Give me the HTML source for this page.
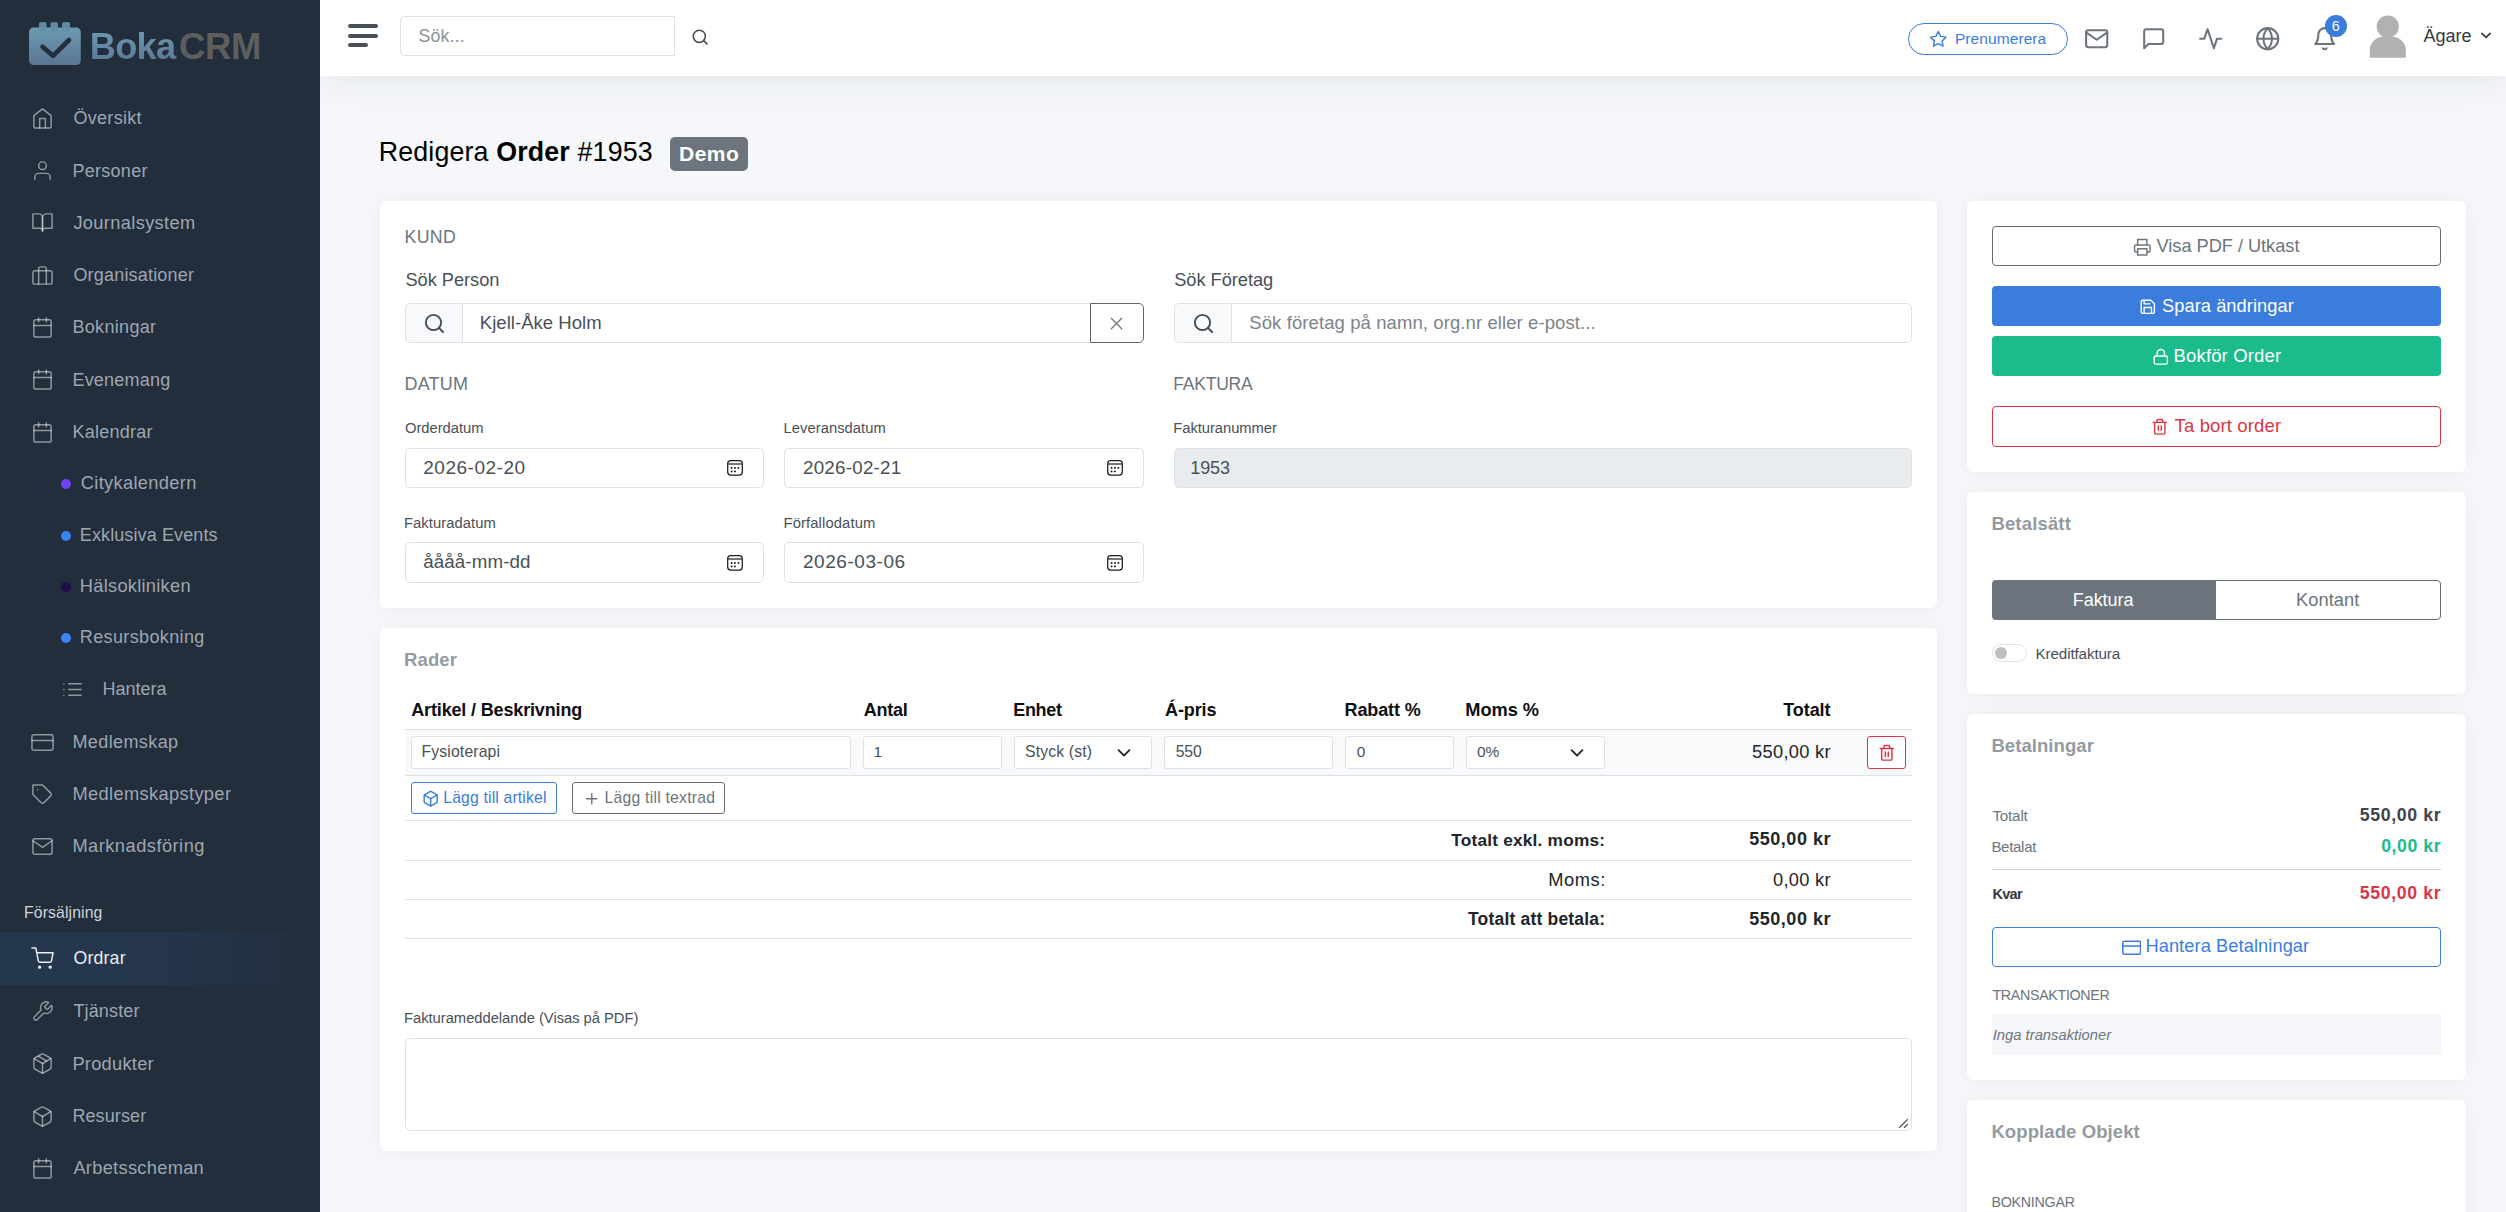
<!DOCTYPE html>
<html lang="sv"><head><meta charset="utf-8"><title>Redigera Order #1953</title><style>
*{box-sizing:border-box;margin:0;padding:0}
html,body{width:2506px;height:1212px;overflow:hidden}
body{background:#f5f7fb;font-family:"Liberation Sans",sans-serif;position:relative}
body>div,body>svg,body>span{position:absolute}
.t{white-space:pre;line-height:1;display:block}
b{font-weight:700}
</style></head><body>
<div style="left:320.00px;top:0.00px;width:2186.00px;height:75.80px;background:#fff;box-shadow:0 0 42px 0 rgba(33,37,41,.1);"></div>
<div style="left:347.90px;top:23.90px;width:30.00px;height:4.00px;background:#495057;border-radius:2px;"></div>
<div style="left:347.90px;top:34.20px;width:30.00px;height:4.00px;background:#495057;border-radius:2px;"></div>
<div style="left:347.90px;top:43.00px;width:20.00px;height:4.00px;background:#495057;border-radius:2px;"></div>
<div style="left:400.00px;top:16.00px;width:275.00px;height:40.00px;background:#fff;border:1px solid #dee2e6;border-radius:5px 0 0 5px;"></div>
<span class="t" style="left:418.40px;top:28.00px;font-size:17.75px;color:#8a9299;letter-spacing:0.168px;">Sök...</span>
<svg style="left:691.20px;top:27.90px;" width="18.20" height="18.20" viewBox="0 0 24 24" fill="none" stroke="#495057" stroke-width="2.1" stroke-linecap="round" stroke-linejoin="round"><circle cx="11" cy="11" r="8"/><line x1="21" y1="21" x2="16.65" y2="16.65"/></svg>
<div style="left:1908.00px;top:23.00px;width:160.00px;height:32.00px;border:1px solid #3b7ddd;border-radius:16px;background:#fff;"></div>
<svg style="left:1928.65px;top:30.15px;" width="18.50" height="18.50" viewBox="0 0 24 24" fill="none" stroke="#3b7ddd" stroke-width="1.9" stroke-linecap="round" stroke-linejoin="round"><polygon points="12 2 15.09 8.26 22 9.27 17 14.14 18.18 21.02 12 17.77 5.82 21.02 7 14.14 2 9.27 8.91 8.26 12 2"/></svg>
<span class="t" style="left:1954.90px;top:31.00px;font-size:15.50px;color:#3b7ddd;letter-spacing:0.085px;">Prenumerera</span>
<svg style="left:2083.80px;top:25.70px;" width="25.40" height="25.40" viewBox="0 0 24 24" fill="none" stroke="#6c757d" stroke-width="1.95" stroke-linecap="round" stroke-linejoin="round"><path d="M4 4h16c1.1 0 2 .9 2 2v12c0 1.1-.9 2-2 2H4c-1.1 0-2-.9-2-2V6c0-1.1.9-2 2-2z"/><polyline points="22,6 12,13 2,6"/></svg>
<svg style="left:2140.70px;top:25.90px;" width="25.40" height="25.40" viewBox="0 0 24 24" fill="none" stroke="#6c757d" stroke-width="1.95" stroke-linecap="round" stroke-linejoin="round"><path d="M21 15a2 2 0 0 1-2 2H7l-4 4V5a2 2 0 0 1 2-2h14a2 2 0 0 1 2 2z"/></svg>
<svg style="left:2197.80px;top:25.80px;" width="25.40" height="25.40" viewBox="0 0 24 24" fill="none" stroke="#6c757d" stroke-width="1.95" stroke-linecap="round" stroke-linejoin="round"><polyline points="22 12 18 12 15 21 9 3 6 12 2 12"/></svg>
<svg style="left:2254.90px;top:25.70px;" width="25.40" height="25.40" viewBox="0 0 24 24" fill="none" stroke="#6c757d" stroke-width="1.95" stroke-linecap="round" stroke-linejoin="round"><circle cx="12" cy="12" r="10"/><line x1="2" y1="12" x2="22" y2="12"/><path d="M12 2a15.3 15.3 0 0 1 4 10 15.3 15.3 0 0 1-4 10 15.3 15.3 0 0 1-4-10 15.3 15.3 0 0 1 4-10z"/></svg>
<svg style="left:2311.80px;top:25.70px;" width="25.40" height="25.40" viewBox="0 0 24 24" fill="none" stroke="#6c757d" stroke-width="1.95" stroke-linecap="round" stroke-linejoin="round"><path d="M18 8A6 6 0 0 0 6 8c0 7-3 9-3 9h18s-3-2-3-9"/><path d="M13.73 21a2 2 0 0 1-3.46 0"/></svg>
<div style="left:2324.80px;top:14.70px;width:22.20px;height:22.20px;background:#3b7ddd;border-radius:50%;"></div>
<span class="t" style="left:2331.70px;top:19.00px;font-size:14.20px;color:#fff;">6</span>
<svg style="left:2366px;top:12px" width="44" height="48" viewBox="2366 12 44 48"><circle cx="2387.8" cy="26.6" r="11.1" fill="#b1b1b1"/><path d="M2369.8 57.8 v-7.5 a13.5 13.5 0 0 1 13.5 -13.5 h9 a13.5 13.5 0 0 1 13.5 13.5 v7.5 z" fill="#b1b1b1"/></svg>
<span class="t" style="left:2423.40px;top:27.00px;font-size:18.00px;color:#343a40;letter-spacing:-0.009px;">Ägare</span>
<svg style="left:2479.5px;top:31px" width="12" height="9" viewBox="0 0 12 9" fill="none" stroke="#343a40" stroke-width="1.7" stroke-linecap="round" stroke-linejoin="round"><polyline points="1.8,2.3 6,6.4 10.2,2.3"/></svg>
<span class="t" style="left:378.75px;top:139.00px;font-size:26.75px;color:#000;letter-spacing:0.168px;">Redigera <b>Order</b> #1953</span>
<div style="left:670.00px;top:137.00px;width:78.00px;height:34.00px;background:#6c757d;border-radius:5px;"></div>
<span class="t" style="left:679.00px;top:143.00px;font-size:21.00px;color:#fff;font-weight:700;letter-spacing:0.489px;">Demo</span>
<div style="left:380.00px;top:201.00px;width:1557.00px;height:407.00px;background:#fff;border-radius:6px;box-shadow:0 0 18px 0 rgba(33,37,41,.05);"></div>
<span class="t" style="left:404.50px;top:229.00px;font-size:17.75px;color:#6c757d;letter-spacing:0.341px;">KUND</span>
<span class="t" style="left:405.50px;top:271.00px;font-size:18.25px;color:#495057;letter-spacing:-0.049px;">Sök Person</span>
<span class="t" style="left:1174.25px;top:271.00px;font-size:18.25px;color:#495057;letter-spacing:-0.052px;">Sök Företag</span>
<div style="left:462.00px;top:303.00px;width:629.00px;height:40.00px;background:#fff;border:1px solid #dee2e6;border-radius:0;"></div>
<div style="left:405.00px;top:303.00px;width:58.00px;height:40.00px;background:#f8f9fa;border:1px solid #dee2e6;border-radius:5px 0 0 5px;"></div>
<div style="left:1090.00px;top:303.00px;width:54.00px;height:40.00px;background:#fff;border:1px solid #5f6871;border-radius:0 5px 5px 0;"></div>
<svg style="left:422.85px;top:311.65px;" width="22.90" height="22.90" viewBox="0 0 24 24" fill="none" stroke="#454c54" stroke-width="2.0" stroke-linecap="round" stroke-linejoin="round"><circle cx="11" cy="11" r="8"/><line x1="21" y1="21" x2="16.65" y2="16.65"/></svg>
<span class="t" style="left:479.75px;top:314.00px;font-size:18.50px;color:#495057;letter-spacing:0.046px;">Kjell-Åke Holm</span>
<svg style="left:1106.25px;top:313.00px;" width="21.00" height="21.00" viewBox="0 0 24 24" fill="none" stroke="#6c757d" stroke-width="1.5" stroke-linecap="round" stroke-linejoin="round"><line x1="18" y1="6" x2="6" y2="18"/><line x1="6" y1="6" x2="18" y2="18"/></svg>
<div style="left:1231.00px;top:303.00px;width:681.00px;height:40.00px;background:#fff;border:1px solid #dee2e6;border-radius:0 5px 5px 0;"></div>
<div style="left:1174.00px;top:303.00px;width:58.00px;height:40.00px;background:#f8f9fa;border:1px solid #dee2e6;border-radius:5px 0 0 5px;"></div>
<svg style="left:1191.85px;top:311.65px;" width="22.90" height="22.90" viewBox="0 0 24 24" fill="none" stroke="#454c54" stroke-width="2.0" stroke-linecap="round" stroke-linejoin="round"><circle cx="11" cy="11" r="8"/><line x1="21" y1="21" x2="16.65" y2="16.65"/></svg>
<span class="t" style="left:1249.25px;top:314.00px;font-size:18.50px;color:#7b838a;letter-spacing:0.094px;">Sök företag på namn, org.nr eller e-post...</span>
<span class="t" style="left:404.50px;top:375.00px;font-size:18.00px;color:#6c757d;letter-spacing:0.206px;">DATUM</span>
<span class="t" style="left:1173.25px;top:376.00px;font-size:17.50px;color:#6c757d;letter-spacing:-0.216px;">FAKTURA</span>
<span class="t" style="left:405.00px;top:421.00px;font-size:14.75px;color:#495057;letter-spacing:-0.018px;">Orderdatum</span>
<span class="t" style="left:783.50px;top:421.00px;font-size:14.75px;color:#495057;letter-spacing:0.050px;">Leveransdatum</span>
<span class="t" style="left:1173.25px;top:421.00px;font-size:14.75px;color:#495057;letter-spacing:-0.037px;">Fakturanummer</span>
<div style="left:405.00px;top:448.00px;width:359.00px;height:40.00px;background:#fff;border:1px solid #dee2e6;border-radius:5px;"></div>
<div style="left:784.00px;top:448.00px;width:360.00px;height:40.00px;background:#fff;border:1px solid #dee2e6;border-radius:5px;"></div>
<div style="left:1174.00px;top:448.00px;width:738.00px;height:40.00px;background:#e9ecef;border:1px solid #dee2e6;border-radius:5px;"></div>
<span class="t" style="left:423.25px;top:458.00px;font-size:19.00px;color:#495057;letter-spacing:0.513px;">2026-02-20</span>
<span class="t" style="left:803.00px;top:459.00px;font-size:18.75px;color:#495057;letter-spacing:0.251px;">2026-02-21</span>
<span class="t" style="left:1190.25px;top:459.00px;font-size:18.00px;color:#495057;letter-spacing:-0.095px;">1953</span>
<svg style="left:727px;top:460px" width="16" height="16" viewBox="0 0 16 16"><rect x="0.7" y="0.7" width="14.6" height="14.4" rx="3" fill="none" stroke="#1c1c1c" stroke-width="1.25"/><line x1="0.8" y1="4" x2="15.2" y2="4" stroke="#4a4a4a" stroke-width="1.5"/><g fill="#0a0a0a"><circle cx="4.6" cy="7.9" r="0.95"/><circle cx="7.9" cy="7.9" r="0.95"/><circle cx="11.4" cy="7.9" r="0.95"/><circle cx="4.6" cy="11.4" r="0.95"/><circle cx="7.9" cy="11.4" r="0.95"/></g></svg>
<svg style="left:1106.6px;top:460px" width="16" height="16" viewBox="0 0 16 16"><rect x="0.7" y="0.7" width="14.6" height="14.4" rx="3" fill="none" stroke="#1c1c1c" stroke-width="1.25"/><line x1="0.8" y1="4" x2="15.2" y2="4" stroke="#4a4a4a" stroke-width="1.5"/><g fill="#0a0a0a"><circle cx="4.6" cy="7.9" r="0.95"/><circle cx="7.9" cy="7.9" r="0.95"/><circle cx="11.4" cy="7.9" r="0.95"/><circle cx="4.6" cy="11.4" r="0.95"/><circle cx="7.9" cy="11.4" r="0.95"/></g></svg>
<span class="t" style="left:404.00px;top:516.00px;font-size:14.75px;color:#495057;letter-spacing:0.072px;">Fakturadatum</span>
<span class="t" style="left:783.50px;top:516.00px;font-size:14.75px;color:#495057;letter-spacing:0.133px;">Förfallodatum</span>
<div style="left:405.00px;top:542.00px;width:359.00px;height:41.00px;background:#fff;border:1px solid #dee2e6;border-radius:5px;"></div>
<div style="left:784.00px;top:542.00px;width:360.00px;height:41.00px;background:#fff;border:1px solid #dee2e6;border-radius:5px;"></div>
<span class="t" style="left:423.25px;top:553.00px;font-size:18.75px;color:#495057;letter-spacing:0.098px;">åååå-mm-dd</span>
<span class="t" style="left:803.00px;top:552.00px;font-size:19.00px;color:#495057;letter-spacing:0.540px;">2026-03-06</span>
<svg style="left:726.6px;top:554.8px" width="16" height="16" viewBox="0 0 16 16"><rect x="0.7" y="0.7" width="14.6" height="14.4" rx="3" fill="none" stroke="#1c1c1c" stroke-width="1.25"/><line x1="0.8" y1="4" x2="15.2" y2="4" stroke="#4a4a4a" stroke-width="1.5"/><g fill="#0a0a0a"><circle cx="4.6" cy="7.9" r="0.95"/><circle cx="7.9" cy="7.9" r="0.95"/><circle cx="11.4" cy="7.9" r="0.95"/><circle cx="4.6" cy="11.4" r="0.95"/><circle cx="7.9" cy="11.4" r="0.95"/></g></svg>
<svg style="left:1106.6px;top:554.8px" width="16" height="16" viewBox="0 0 16 16"><rect x="0.7" y="0.7" width="14.6" height="14.4" rx="3" fill="none" stroke="#1c1c1c" stroke-width="1.25"/><line x1="0.8" y1="4" x2="15.2" y2="4" stroke="#4a4a4a" stroke-width="1.5"/><g fill="#0a0a0a"><circle cx="4.6" cy="7.9" r="0.95"/><circle cx="7.9" cy="7.9" r="0.95"/><circle cx="11.4" cy="7.9" r="0.95"/><circle cx="4.6" cy="11.4" r="0.95"/><circle cx="7.9" cy="11.4" r="0.95"/></g></svg>
<div style="left:380.00px;top:628.00px;width:1557.00px;height:523.00px;background:#fff;border-radius:6px;box-shadow:0 0 18px 0 rgba(33,37,41,.05);"></div>
<span class="t" style="left:404.00px;top:651.00px;font-size:18.50px;color:#939ba2;font-weight:700;letter-spacing:0.124px;">Rader</span>
<span class="t" style="left:411.25px;top:701.00px;font-size:18.00px;color:#0e0f10;font-weight:700;letter-spacing:-0.153px;">Artikel / Beskrivning</span>
<span class="t" style="left:863.75px;top:701.00px;font-size:18.00px;color:#0e0f10;font-weight:700;letter-spacing:-0.250px;">Antal</span>
<span class="t" style="left:1013.25px;top:701.00px;font-size:18.00px;color:#0e0f10;font-weight:700;letter-spacing:-0.318px;">Enhet</span>
<span class="t" style="left:1165.00px;top:701.00px;font-size:18.00px;color:#0e0f10;font-weight:700;letter-spacing:-0.101px;">Á-pris</span>
<span class="t" style="left:1344.50px;top:701.00px;font-size:18.00px;color:#0e0f10;font-weight:700;letter-spacing:-0.109px;">Rabatt %</span>
<span class="t" style="left:1465.25px;top:701.00px;font-size:18.25px;color:#0e0f10;font-weight:700;letter-spacing:-0.061px;">Moms %</span>
<span class="t" style="right:675.59px;top:701.00px;font-size:18.00px;color:#0e0f10;font-weight:700;letter-spacing:-0.082px;">Totalt</span>
<div style="left:405.00px;top:729.00px;width:1507.00px;height:47.00px;background:#f8f9fa;"></div>
<div style="left:405.00px;top:729.00px;width:1507.00px;height:1.00px;background:#dee2e6;"></div>
<div style="left:405.00px;top:775.00px;width:1507.00px;height:1.00px;background:#dee2e6;"></div>
<div style="left:411.00px;top:736.00px;width:440.00px;height:33.00px;background:#fff;border:1px solid #dee2e6;border-radius:3px;"></div>
<div style="left:863.00px;top:736.00px;width:139.00px;height:33.00px;background:#fff;border:1px solid #dee2e6;border-radius:3px;"></div>
<div style="left:1014.00px;top:736.00px;width:138.00px;height:33.00px;background:#fff;border:1px solid #dee2e6;border-radius:3px;"></div>
<div style="left:1164.00px;top:736.00px;width:169.00px;height:33.00px;background:#fff;border:1px solid #dee2e6;border-radius:3px;"></div>
<div style="left:1345.00px;top:736.00px;width:109.00px;height:33.00px;background:#fff;border:1px solid #dee2e6;border-radius:3px;"></div>
<div style="left:1466.00px;top:736.00px;width:139.00px;height:33.00px;background:#fff;border:1px solid #dee2e6;border-radius:3px;"></div>
<span class="t" style="left:421.50px;top:744.00px;font-size:15.75px;color:#495057;letter-spacing:0.147px;">Fysioterapi</span>
<span class="t" style="left:873.50px;top:744.00px;font-size:15.42px;color:#495057;">1</span>
<span class="t" style="left:1025.00px;top:744.00px;font-size:15.75px;color:#495057;letter-spacing:0.152px;">Styck (st)</span>
<span class="t" style="left:1175.75px;top:744.00px;font-size:15.75px;color:#495057;letter-spacing:-0.136px;">550</span>
<span class="t" style="left:1356.75px;top:744.00px;font-size:15.42px;color:#495057;">0</span>
<span class="t" style="left:1477.00px;top:744.00px;font-size:15.50px;color:#495057;letter-spacing:-0.124px;">0%</span>
<svg style="left:1116.3px;top:746.6px" width="16" height="12" viewBox="0 0 16 12" fill="none" stroke="#212529" stroke-width="1.9" stroke-linecap="round" stroke-linejoin="round"><polyline points="2.6,3.2 8,8.6 13.4,3.2"/></svg>
<svg style="left:1569px;top:746.6px" width="16" height="12" viewBox="0 0 16 12" fill="none" stroke="#212529" stroke-width="1.9" stroke-linecap="round" stroke-linejoin="round"><polyline points="2.6,3.2 8,8.6 13.4,3.2"/></svg>
<span class="t" style="right:675.11px;top:743.00px;font-size:18.25px;color:#212529;letter-spacing:0.310px;">550,00 kr</span>
<div style="left:1867.00px;top:736.00px;width:39.00px;height:33.00px;background:#fff;border:1px solid #dc3545;border-radius:3px;"></div>
<svg style="left:1878.10px;top:743.90px;" width="17.60" height="17.60" viewBox="0 0 24 24" fill="none" stroke="#dc3545" stroke-width="2.0" stroke-linecap="round" stroke-linejoin="round"><polyline points="3 6 5 6 21 6"/><path d="M19 6v14a2 2 0 0 1-2 2H7a2 2 0 0 1-2-2V6m3 0V4a2 2 0 0 1 2-2h4a2 2 0 0 1 2 2v2"/><line x1="10" y1="11" x2="10" y2="17"/><line x1="14" y1="11" x2="14" y2="17"/></svg>
<div style="left:411.00px;top:782.00px;width:146.00px;height:32.00px;background:#fff;border:1px solid #3b7ddd;border-radius:3px;"></div>
<svg style="left:422.10px;top:790.20px;" width="17.40" height="17.40" viewBox="0 0 24 24" fill="none" stroke="#3b7ddd" stroke-width="2.0" stroke-linecap="round" stroke-linejoin="round"><path d="M21 16V8a2 2 0 0 0-1-1.73l-7-4a2 2 0 0 0-2 0l-7 4A2 2 0 0 0 3 8v8a2 2 0 0 0 1 1.73l7 4a2 2 0 0 0 2 0l7-4A2 2 0 0 0 21 16z"/><polyline points="3.27 6.96 12 12.01 20.73 6.96"/><line x1="12" y1="22.08" x2="12" y2="12"/></svg>
<span class="t" style="left:443.25px;top:790.00px;font-size:15.75px;color:#3b7ddd;letter-spacing:0.160px;">Lägg till artikel</span>
<div style="left:572.00px;top:782.00px;width:153.00px;height:32.00px;background:#fff;border:1px solid #646d75;border-radius:3px;"></div>
<svg style="left:583.10px;top:790.10px;" width="17.60" height="17.60" viewBox="0 0 24 24" fill="none" stroke="#6c757d" stroke-width="1.9" stroke-linecap="round" stroke-linejoin="round"><line x1="12" y1="5" x2="12" y2="19"/><line x1="5" y1="12" x2="19" y2="12"/></svg>
<span class="t" style="left:604.50px;top:790.00px;font-size:15.75px;color:#6c757d;letter-spacing:0.231px;">Lägg till textrad</span>
<div style="left:405.00px;top:820.00px;width:1507.00px;height:1.00px;background:#dee2e6;"></div>
<div style="left:405.00px;top:860.00px;width:1507.00px;height:1.00px;background:#dee2e6;"></div>
<div style="left:405.00px;top:899.00px;width:1507.00px;height:1.00px;background:#dee2e6;"></div>
<div style="left:405.00px;top:938.00px;width:1507.00px;height:1.00px;background:#dee2e6;"></div>
<span class="t" style="right:900.80px;top:832.00px;font-size:17.25px;color:#212529;font-weight:700;letter-spacing:0.210px;">Totalt exkl. moms:</span>
<span class="t" style="right:900.10px;top:871.00px;font-size:18.25px;color:#212529;letter-spacing:0.580px;">Moms:</span>
<span class="t" style="right:900.73px;top:911.00px;font-size:17.50px;color:#212529;font-weight:700;letter-spacing:0.189px;">Totalt att betala:</span>
<span class="t" style="right:674.97px;top:830.00px;font-size:18.00px;color:#212529;font-weight:700;letter-spacing:0.522px;">550,00 kr</span>
<span class="t" style="right:675.13px;top:871.00px;font-size:18.25px;color:#212529;letter-spacing:0.297px;">0,00 kr</span>
<span class="t" style="right:674.97px;top:910.00px;font-size:18.00px;color:#212529;font-weight:700;letter-spacing:0.522px;">550,00 kr</span>
<span class="t" style="left:404.00px;top:1011.00px;font-size:14.75px;color:#495057;letter-spacing:-0.020px;">Fakturameddelande (Visas på PDF)</span>
<div style="left:405.00px;top:1038.00px;width:1507.00px;height:93.00px;background:#fff;border:1px solid #dee2e6;border-radius:5px;"></div>
<svg style="left:1897px;top:1117px" width="12" height="12" viewBox="0 0 12 12" stroke="#444" stroke-width="1.3" stroke-linecap="round"><line x1="2.6" y1="10.4" x2="10.4" y2="2.6"/><line x1="7.4" y1="10.4" x2="10.4" y2="7.4"/></svg>
<div style="left:1967.00px;top:201.00px;width:499.00px;height:271.00px;background:#fff;border-radius:6px;box-shadow:0 0 18px 0 rgba(33,37,41,.05);"></div>
<div style="left:1967.00px;top:492.00px;width:499.00px;height:202.00px;background:#fff;border-radius:6px;box-shadow:0 0 18px 0 rgba(33,37,41,.05);"></div>
<div style="left:1967.00px;top:714.00px;width:499.00px;height:366.00px;background:#fff;border-radius:6px;box-shadow:0 0 18px 0 rgba(33,37,41,.05);"></div>
<div style="left:1967.00px;top:1100.00px;width:499.00px;height:200.00px;background:#fff;border-radius:6px;box-shadow:0 0 18px 0 rgba(33,37,41,.05);"></div>
<div style="left:1992.00px;top:226.00px;width:449.00px;height:40.00px;background:#fff;border:1px solid #646d75;border-radius:4px;"></div>
<svg style="left:2132.50px;top:237.50px;" width="18.60" height="18.60" viewBox="0 0 24 24" fill="none" stroke="#6c757d" stroke-width="1.9" stroke-linecap="round" stroke-linejoin="round"><polyline points="6 9 6 2 18 2 18 9"/><path d="M6 18H4a2 2 0 0 1-2-2v-5a2 2 0 0 1 2-2h16a2 2 0 0 1 2 2v5a2 2 0 0 1-2 2h-2"/><rect x="6" y="14" width="12" height="8"/></svg>
<span class="t" style="left:2156.50px;top:237.00px;font-size:18.25px;color:#6c757d;letter-spacing:-0.045px;">Visa PDF / Utkast</span>
<div style="left:1992.00px;top:286.00px;width:449.00px;height:40.00px;background:#3b7ddd;border-radius:4px;"></div>
<svg style="left:2138.80px;top:297.80px;" width="17.60" height="17.60" viewBox="0 0 24 24" fill="none" stroke="#fff" stroke-width="1.9" stroke-linecap="round" stroke-linejoin="round"><path d="M19 21H5a2 2 0 0 1-2-2V5a2 2 0 0 1 2-2h11l5 5v11a2 2 0 0 1-2 2z"/><polyline points="17 21 17 13 7 13 7 21"/><polyline points="7 3 7 8 15 8"/></svg>
<span class="t" style="left:2162.00px;top:297.00px;font-size:18.25px;color:#fff;letter-spacing:0.063px;">Spara ändringar</span>
<div style="left:1992.00px;top:336.00px;width:449.00px;height:40.00px;background:#1cbb8c;border-radius:4px;"></div>
<svg style="left:2151.90px;top:347.50px;" width="17.60" height="17.60" viewBox="0 0 24 24" fill="none" stroke="#fff" stroke-width="1.9" stroke-linecap="round" stroke-linejoin="round"><rect x="3" y="11" width="18" height="11" rx="2" ry="2"/><path d="M7 11V7a5 5 0 0 1 10 0v4"/></svg>
<span class="t" style="left:2173.60px;top:347.00px;font-size:18.50px;color:#fff;letter-spacing:0.141px;">Bokför Order</span>
<div style="left:1992.00px;top:406.00px;width:449.00px;height:41.00px;background:#fff;border:1px solid #dc3545;border-radius:4px;"></div>
<svg style="left:2150.80px;top:418.00px;" width="17.60" height="17.60" viewBox="0 0 24 24" fill="none" stroke="#dc3545" stroke-width="1.9" stroke-linecap="round" stroke-linejoin="round"><polyline points="3 6 5 6 21 6"/><path d="M19 6v14a2 2 0 0 1-2 2H7a2 2 0 0 1-2-2V6m3 0V4a2 2 0 0 1 2-2h4a2 2 0 0 1 2 2v2"/><line x1="10" y1="11" x2="10" y2="17"/><line x1="14" y1="11" x2="14" y2="17"/></svg>
<span class="t" style="left:2174.60px;top:417.00px;font-size:18.50px;color:#dc3545;letter-spacing:0.131px;">Ta bort order</span>
<span class="t" style="left:1991.40px;top:515.00px;font-size:18.50px;color:#939ba2;font-weight:700;letter-spacing:0.165px;">Betalsätt</span>
<div style="left:2215.00px;top:580.00px;width:226.00px;height:40.00px;background:#fff;border:1px solid #646d75;border-radius:0 4px 4px 0;"></div>
<div style="left:1992.00px;top:580.00px;width:224.00px;height:40.00px;background:#6c757d;border-radius:4px 0 0 4px;"></div>
<span class="t" style="left:2072.80px;top:591.00px;font-size:18.00px;color:#fff;letter-spacing:-0.070px;">Faktura</span>
<span class="t" style="left:2296.10px;top:591.00px;font-size:18.25px;color:#6c757d;letter-spacing:0.058px;">Kontant</span>
<div style="left:1992.00px;top:644.00px;width:35.00px;height:18.00px;background:#fff;border:1px solid #dee2e6;border-radius:9px;"></div>
<div style="left:1995.00px;top:646.70px;width:12.40px;height:12.40px;background:#bfbfbf;border-radius:50%;"></div>
<span class="t" style="left:2035.50px;top:646.00px;font-size:15.25px;color:#495057;letter-spacing:-0.141px;">Kreditfaktura</span>
<span class="t" style="left:1991.40px;top:737.00px;font-size:18.50px;color:#939ba2;font-weight:700;letter-spacing:0.072px;">Betalningar</span>
<span class="t" style="left:1992.40px;top:808.00px;font-size:15.25px;color:#6c757d;letter-spacing:-0.203px;">Totalt</span>
<span class="t" style="right:64.79px;top:807.00px;font-size:17.75px;color:#3e444a;font-weight:700;letter-spacing:0.599px;">550,00 kr</span>
<span class="t" style="left:1991.40px;top:839.00px;font-size:15.00px;color:#6c757d;letter-spacing:-0.289px;">Betalat</span>
<span class="t" style="right:64.87px;top:838.00px;font-size:17.75px;color:#1cbb8c;font-weight:700;letter-spacing:0.524px;">0,00 kr</span>
<div style="left:1992.00px;top:869.00px;width:449.00px;height:1.00px;background:#cdd1d5;"></div>
<span class="t" style="left:1992.40px;top:887.00px;font-size:14.50px;color:#343a40;font-weight:700;letter-spacing:-0.669px;">Kvar</span>
<span class="t" style="right:64.79px;top:885.00px;font-size:17.75px;color:#dc3545;font-weight:700;letter-spacing:0.599px;">550,00 kr</span>
<div style="left:1992.00px;top:927.00px;width:449.00px;height:40.00px;background:#fff;border:1px solid #3b7ddd;border-radius:4px;"></div>
<svg style="left:2121.80px;top:938.10px;" width="19.40" height="19.40" viewBox="0 0 24 24" fill="none" stroke="#3b7ddd" stroke-width="1.9" stroke-linecap="round" stroke-linejoin="round"><rect x="1" y="4" width="22" height="16" rx="2" ry="2"/><line x1="1" y1="10" x2="23" y2="10"/></svg>
<span class="t" style="left:2145.40px;top:937.00px;font-size:18.25px;color:#3b7ddd;letter-spacing:0.081px;">Hantera Betalningar</span>
<span class="t" style="left:1992.40px;top:988.00px;font-size:14.25px;color:#6c757d;letter-spacing:-0.312px;">TRANSAKTIONER</span>
<div style="left:1992.00px;top:1014.00px;width:449.00px;height:41.00px;background:#f5f7fb;"></div>
<span class="t" style="left:1992.70px;top:1028.00px;font-size:14.75px;color:#6c757d;font-style:italic;letter-spacing:0.020px;">Inga transaktioner</span>
<span class="t" style="left:1991.40px;top:1123.00px;font-size:18.50px;color:#939ba2;font-weight:700;letter-spacing:0.097px;">Kopplade Objekt</span>
<span class="t" style="left:1991.40px;top:1195.00px;font-size:14.25px;color:#6c757d;letter-spacing:-0.241px;">BOKNINGAR</span>
<div style="left:0.00px;top:0.00px;width:320.00px;height:1212.00px;background:#222e3c;"></div>
<svg style="left:27px;top:20px" width="56" height="48" viewBox="27 20 56 48">
<defs><linearGradient id="lg" x1="0" y1="0" x2="0" y2="1"><stop offset="0" stop-color="#6b9bb2"/><stop offset="1" stop-color="#5b7593"/></linearGradient></defs>
<rect x="39" y="22.2" width="7.4" height="9.5" rx="1.6" fill="#5f89a3"/>
<rect x="50.6" y="22.2" width="7.4" height="9.5" rx="1.6" fill="#5f89a3"/>
<rect x="62.2" y="22.2" width="7.8" height="9.5" rx="1.6" fill="#5f89a3"/>
<rect x="29" y="27.6" width="51.8" height="37.4" rx="4.5" fill="url(#lg)"/>
<rect x="39" y="22.2" width="7.4" height="9.5" rx="1.6" fill="#5f89a3" opacity=".55"/>
<rect x="50.6" y="22.2" width="7.4" height="9.5" rx="1.6" fill="#5f89a3" opacity=".55"/>
<rect x="62.2" y="22.2" width="7.8" height="9.5" rx="1.6" fill="#5f89a3" opacity=".55"/>
<polyline points="42.5,46.8 53,55.8 69,40" fill="none" stroke="#222e3c" stroke-width="4.6" stroke-linecap="round" stroke-linejoin="round"/>
</svg>
<span class="t" style="left:89.70px;top:29.00px;font-size:36.25px;color:transparent;font-weight:700;letter-spacing:-0.732px;background:linear-gradient(#6b9bb2,#5b7593);-webkit-background-clip:text;background-clip:text;padding-right:5px;">Boka</span>
<span class="t" style="left:179.00px;top:29.00px;font-size:36.50px;color:#5e5e5e;font-weight:700;letter-spacing:-0.360px;">CRM</span>
<svg style="left:30.80px;top:106.80px;" width="23.00" height="23.00" viewBox="0 0 24 24" fill="none" stroke="rgba(233,236,239,.55)" stroke-width="1.55" stroke-linecap="round" stroke-linejoin="round"><path d="M3 9l9-7 9 7v11a2 2 0 0 1-2 2H5a2 2 0 0 1-2-2z"/><polyline points="9 22 9 12 15 12 15 22"/></svg>
<span class="t" style="left:73.40px;top:109.00px;font-size:18.00px;color:#9fa6b0;letter-spacing:0.312px;">Översikt</span>
<svg style="left:30.80px;top:159.10px;" width="23.00" height="23.00" viewBox="0 0 24 24" fill="none" stroke="rgba(233,236,239,.55)" stroke-width="1.55" stroke-linecap="round" stroke-linejoin="round"><path d="M20 21v-2a4 4 0 0 0-4-4H8a4 4 0 0 0-4 4v2"/><circle cx="12" cy="7" r="4"/></svg>
<span class="t" style="left:72.40px;top:162.00px;font-size:18.00px;color:#9fa6b0;letter-spacing:0.292px;">Personer</span>
<svg style="left:30.80px;top:211.40px;" width="23.00" height="23.00" viewBox="0 0 24 24" fill="none" stroke="rgba(233,236,239,.55)" stroke-width="1.55" stroke-linecap="round" stroke-linejoin="round"><path d="M2 3h6a4 4 0 0 1 4 4v14a3 3 0 0 0-3-3H2z"/><path d="M22 3h-6a4 4 0 0 0-4 4v14a3 3 0 0 1 3-3h7z"/></svg>
<span class="t" style="left:73.40px;top:214.00px;font-size:18.25px;color:#9fa6b0;letter-spacing:0.346px;">Journalsystem</span>
<svg style="left:30.80px;top:263.70px;" width="23.00" height="23.00" viewBox="0 0 24 24" fill="none" stroke="rgba(233,236,239,.55)" stroke-width="1.55" stroke-linecap="round" stroke-linejoin="round"><rect x="2" y="7" width="20" height="14" rx="2" ry="2"/><path d="M16 21V5a2 2 0 0 0-2-2h-4a2 2 0 0 0-2 2v16"/></svg>
<span class="t" style="left:73.40px;top:266.00px;font-size:18.00px;color:#9fa6b0;letter-spacing:0.194px;">Organisationer</span>
<svg style="left:30.80px;top:316.00px;" width="23.00" height="23.00" viewBox="0 0 24 24" fill="none" stroke="rgba(233,236,239,.55)" stroke-width="1.55" stroke-linecap="round" stroke-linejoin="round"><rect x="3" y="4" width="18" height="18" rx="2" ry="2"/><line x1="16" y1="2" x2="16" y2="6"/><line x1="8" y1="2" x2="8" y2="6"/><line x1="3" y1="10" x2="21" y2="10"/></svg>
<span class="t" style="left:72.40px;top:318.00px;font-size:18.00px;color:#9fa6b0;letter-spacing:0.329px;">Bokningar</span>
<svg style="left:30.80px;top:368.30px;" width="23.00" height="23.00" viewBox="0 0 24 24" fill="none" stroke="rgba(233,236,239,.55)" stroke-width="1.55" stroke-linecap="round" stroke-linejoin="round"><rect x="3" y="4" width="18" height="18" rx="2" ry="2"/><line x1="16" y1="2" x2="16" y2="6"/><line x1="8" y1="2" x2="8" y2="6"/><line x1="3" y1="10" x2="21" y2="10"/></svg>
<span class="t" style="left:72.40px;top:371.00px;font-size:18.00px;color:#9fa6b0;letter-spacing:0.229px;">Evenemang</span>
<svg style="left:30.80px;top:420.60px;" width="23.00" height="23.00" viewBox="0 0 24 24" fill="none" stroke="rgba(233,236,239,.55)" stroke-width="1.55" stroke-linecap="round" stroke-linejoin="round"><rect x="3" y="4" width="18" height="18" rx="2" ry="2"/><line x1="16" y1="2" x2="16" y2="6"/><line x1="8" y1="2" x2="8" y2="6"/><line x1="3" y1="10" x2="21" y2="10"/></svg>
<span class="t" style="left:72.40px;top:423.00px;font-size:18.00px;color:#9fa6b0;letter-spacing:0.256px;">Kalendrar</span>
<div style="left:60.80px;top:478.55px;width:10.50px;height:10.50px;background:#6f42f5;border-radius:50%;"></div>
<span class="t" style="left:80.80px;top:474.00px;font-size:18.25px;color:#9fa6b0;letter-spacing:0.330px;">Citykalendern</span>
<div style="left:60.80px;top:530.55px;width:10.50px;height:10.50px;background:#3b82f6;border-radius:50%;"></div>
<span class="t" style="left:79.80px;top:526.00px;font-size:18.00px;color:#9fa6b0;letter-spacing:0.109px;">Exklusiva Events</span>
<div style="left:60.80px;top:581.55px;width:10.50px;height:10.50px;background:#1e0b4b;border-radius:50%;"></div>
<span class="t" style="left:79.80px;top:577.00px;font-size:18.25px;color:#9fa6b0;letter-spacing:0.268px;">Hälsokliniken</span>
<div style="left:60.80px;top:632.85px;width:10.50px;height:10.50px;background:#3b82f6;border-radius:50%;"></div>
<span class="t" style="left:79.80px;top:628.00px;font-size:18.00px;color:#9fa6b0;letter-spacing:0.369px;">Resursbokning</span>
<svg style="left:60.70px;top:677.80px;" width="23.00" height="23.00" viewBox="0 0 24 24" fill="none" stroke="rgba(233,236,239,.55)" stroke-width="1.55" stroke-linecap="round" stroke-linejoin="round"><line x1="8" y1="6" x2="21" y2="6"/><line x1="8" y1="12" x2="21" y2="12"/><line x1="8" y1="18" x2="21" y2="18"/><line x1="3" y1="6" x2="3.01" y2="6"/><line x1="3" y1="12" x2="3.01" y2="12"/><line x1="3" y1="18" x2="3.01" y2="18"/></svg>
<span class="t" style="left:102.40px;top:680.00px;font-size:18.00px;color:#9fa6b0;letter-spacing:0.027px;">Hantera</span>
<svg style="left:30.80px;top:730.50px;" width="23.00" height="23.00" viewBox="0 0 24 24" fill="none" stroke="rgba(233,236,239,.55)" stroke-width="1.55" stroke-linecap="round" stroke-linejoin="round"><rect x="1" y="4" width="22" height="16" rx="2" ry="2"/><line x1="1" y1="10" x2="23" y2="10"/></svg>
<span class="t" style="left:72.40px;top:733.00px;font-size:18.00px;color:#9fa6b0;letter-spacing:0.407px;">Medlemskap</span>
<svg style="left:30.80px;top:782.70px;" width="23.00" height="23.00" viewBox="0 0 24 24" fill="none" stroke="rgba(233,236,239,.55)" stroke-width="1.55" stroke-linecap="round" stroke-linejoin="round"><path d="M20.59 13.41l-7.17 7.17a2 2 0 0 1-2.83 0L2 12V2h10l8.59 8.59a2 2 0 0 1 0 2.82z"/><line x1="7" y1="7" x2="7.01" y2="7"/></svg>
<span class="t" style="left:72.40px;top:785.00px;font-size:18.25px;color:#9fa6b0;letter-spacing:0.361px;">Medlemskapstyper</span>
<svg style="left:30.80px;top:834.70px;" width="23.00" height="23.00" viewBox="0 0 24 24" fill="none" stroke="rgba(233,236,239,.55)" stroke-width="1.55" stroke-linecap="round" stroke-linejoin="round"><path d="M4 4h16c1.1 0 2 .9 2 2v12c0 1.1-.9 2-2 2H4c-1.1 0-2-.9-2-2V6c0-1.1.9-2 2-2z"/><polyline points="22,6 12,13 2,6"/></svg>
<span class="t" style="left:72.40px;top:837.00px;font-size:18.25px;color:#9fa6b0;letter-spacing:0.482px;">Marknadsföring</span>
<span class="t" style="left:24.10px;top:905.00px;font-size:15.75px;color:#ced4da;letter-spacing:0.121px;">Försäljning</span>
<div style="left:0.00px;top:932.00px;width:320.00px;height:52.70px;background:linear-gradient(90deg,rgba(59,125,221,.12),rgba(59,125,221,.10) 50%,rgba(59,125,221,0) 100%);"></div>
<svg style="left:30.80px;top:947.00px;" width="23.00" height="23.00" viewBox="0 0 24 24" fill="none" stroke="#e9ecef" stroke-width="1.55" stroke-linecap="round" stroke-linejoin="round"><circle cx="9" cy="21" r="1"/><circle cx="20" cy="21" r="1"/><path d="M1 1h4l2.68 13.39a2 2 0 0 0 2 1.61h9.72a2 2 0 0 0 2-1.61L23 6H6"/></svg>
<span class="t" style="left:73.40px;top:950.00px;font-size:17.75px;color:#e9ecef;letter-spacing:0.183px;">Ordrar</span>
<svg style="left:30.80px;top:999.70px;" width="23.00" height="23.00" viewBox="0 0 24 24" fill="none" stroke="rgba(233,236,239,.55)" stroke-width="1.55" stroke-linecap="round" stroke-linejoin="round"><path d="M14.7 6.3a1 1 0 0 0 0 1.4l1.6 1.6a1 1 0 0 0 1.4 0l3.77-3.77a6 6 0 0 1-7.94 7.94l-6.91 6.91a2.12 2.12 0 0 1-3-3l6.91-6.91a6 6 0 0 1 7.94-7.94l-3.76 3.76z"/></svg>
<span class="t" style="left:73.40px;top:1002.00px;font-size:18.00px;color:#9fa6b0;letter-spacing:0.152px;">Tjänster</span>
<svg style="left:30.80px;top:1052.30px;" width="23.00" height="23.00" viewBox="0 0 24 24" fill="none" stroke="rgba(233,236,239,.55)" stroke-width="1.55" stroke-linecap="round" stroke-linejoin="round"><line x1="16.5" y1="9.4" x2="7.5" y2="4.21"/><path d="M21 16V8a2 2 0 0 0-1-1.73l-7-4a2 2 0 0 0-2 0l-7 4A2 2 0 0 0 3 8v8a2 2 0 0 0 1 1.73l7 4a2 2 0 0 0 2 0l7-4A2 2 0 0 0 21 16z"/><polyline points="3.27 6.96 12 12.01 20.73 6.96"/><line x1="12" y1="22.08" x2="12" y2="12"/></svg>
<span class="t" style="left:72.40px;top:1055.00px;font-size:18.25px;color:#9fa6b0;letter-spacing:0.269px;">Produkter</span>
<svg style="left:30.80px;top:1104.50px;" width="23.00" height="23.00" viewBox="0 0 24 24" fill="none" stroke="rgba(233,236,239,.55)" stroke-width="1.55" stroke-linecap="round" stroke-linejoin="round"><path d="M21 16V8a2 2 0 0 0-1-1.73l-7-4a2 2 0 0 0-2 0l-7 4A2 2 0 0 0 3 8v8a2 2 0 0 0 1 1.73l7 4a2 2 0 0 0 2 0l7-4A2 2 0 0 0 21 16z"/><polyline points="3.27 6.96 12 12.01 20.73 6.96"/><line x1="12" y1="22.08" x2="12" y2="12"/></svg>
<span class="t" style="left:72.40px;top:1107.00px;font-size:18.00px;color:#9fa6b0;letter-spacing:0.109px;">Resurser</span>
<svg style="left:30.80px;top:1156.60px;" width="23.00" height="23.00" viewBox="0 0 24 24" fill="none" stroke="rgba(233,236,239,.55)" stroke-width="1.55" stroke-linecap="round" stroke-linejoin="round"><rect x="3" y="4" width="18" height="18" rx="2" ry="2"/><line x1="16" y1="2" x2="16" y2="6"/><line x1="8" y1="2" x2="8" y2="6"/><line x1="3" y1="10" x2="21" y2="10"/></svg>
<span class="t" style="left:73.40px;top:1159.00px;font-size:18.25px;color:#9fa6b0;letter-spacing:0.296px;">Arbetsscheman</span>
</body></html>
